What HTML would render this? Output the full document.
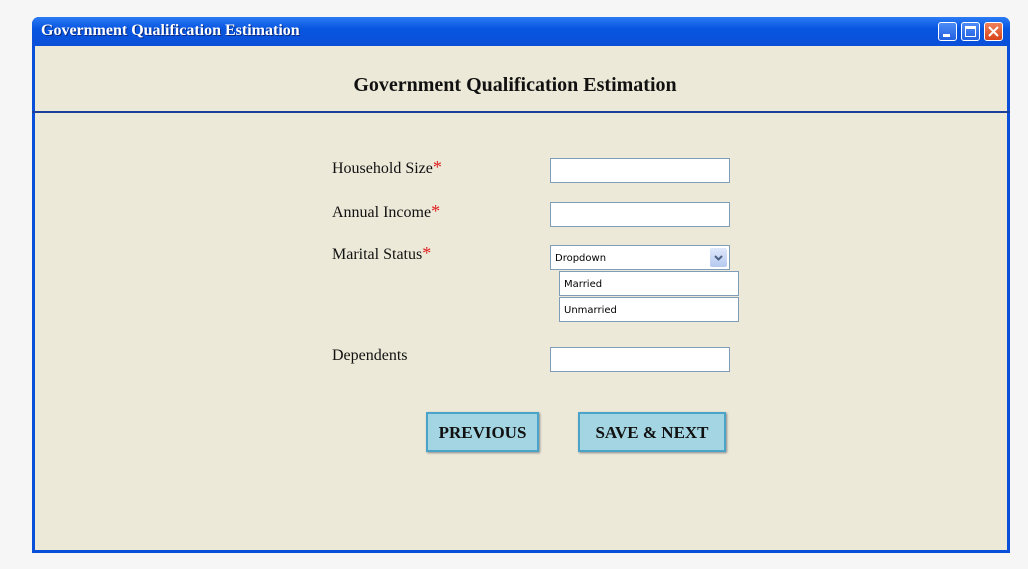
<!DOCTYPE html>
<html><head><style>
body{margin:0;width:1028px;height:569px;background:#f6f6f6;position:relative;overflow:hidden;font-family:"Liberation Serif",serif}
.win{position:absolute;left:32px;top:17px;width:978px;height:536px;background:#0a4fd8;border-radius:7px 7px 0 0}
.tb{position:absolute;left:0;top:0;right:0;height:29px;background:linear-gradient(#2a7bf5,#0856e0 40%,#0a4fd8);border-radius:7px 7px 0 0}
.tt{position:absolute;left:9px;top:5px;color:#fff;font-weight:bold;font-size:16px;text-shadow:1px 1px 0 #0a2a80}
.body{position:absolute;left:3px;top:29px;right:3px;bottom:3px;background:#ECE9D8}
.b{position:absolute;top:5px;width:19px;height:19px;border:1px solid #fff;border-radius:3px;box-sizing:border-box;background:linear-gradient(#4d8cf7,#2260e0)}
.h{position:absolute;left:-3px;top:65px;width:978px;height:2px;background:#1b3f9a}
.lbl{position:absolute;left:297px;font-size:16px;color:#111}
.lbl span{color:#e02020;font-size:18px}
.in{position:absolute;left:515px;width:180px;height:25px;background:#fff;border:1px solid #7f9db9;box-sizing:border-box}
.opt{position:absolute;left:524px;width:180px;height:25px;background:#fff;border:1px solid #7f9db9;box-sizing:border-box;font-family:"DejaVu Sans",sans-serif;font-size:10px;padding:7px 0 0 4px}
.btn{position:absolute;top:366px;height:40px;background:#a3d5e2;border:2px solid #4aa3c8;box-sizing:border-box;font-weight:bold;font-size:17px;text-align:center;line-height:37px;color:#111;box-shadow:1px 1px 2px #888}
</style></head><body>
<div class="win">
<div class="tb"><div class="tt">Government Qualification Estimation</div>
<div class="b" style="left:906px"><div style="position:absolute;left:4px;top:11px;width:7px;height:3px;background:#fff"></div></div>
<div class="b" style="left:929px"><div style="position:absolute;left:3px;top:3px;width:11px;height:11px;border:1px solid #fff;border-top-width:3px;box-sizing:border-box"></div></div>
<div class="b" style="left:952px;background:linear-gradient(#f0805a,#d8431a)"><svg width="17" height="17" style="position:absolute;left:0;top:0"><path d="M4 4L13 13M13 4L4 13" stroke="#fff" stroke-width="2"/></svg></div>
</div>
<div class="body">
<div style="position:absolute;left:0;right:12px;top:28px;text-align:center;font-weight:bold;font-size:20px;color:#111">Government Qualification Estimation</div>
<div class="h"></div>
<div class="lbl" style="top:111px">Household Size<span>*</span></div>
<div class="in" style="top:112px"></div>
<div class="lbl" style="top:155px">Annual Income<span>*</span></div>
<div class="in" style="top:156px"></div>
<div class="lbl" style="top:197px">Marital Status<span>*</span></div>
<div class="in" style="top:199px;font-family:'DejaVu Sans',sans-serif;font-size:10px;padding:7px 0 0 4px">Dropdown<div style="position:absolute;right:2px;top:2px;width:17px;height:19px;background:linear-gradient(#dfe8fb,#b5c9f0);border-radius:2px"><svg width="17" height="19"><path d="M5 8L8.5 11.5L12 8" stroke="#4d6185" stroke-width="2" fill="none"/></svg></div></div>
<div class="opt" style="top:225px">Married</div>
<div class="opt" style="top:251px">Unmarried</div>
<div class="lbl" style="top:301px">Dependents</div>
<div class="in" style="top:301px"></div>
<div class="btn" style="left:391px;width:113px">PREVIOUS</div>
<div class="btn" style="left:543px;width:148px">SAVE &amp; NEXT</div>
</div></div>
</body></html>
